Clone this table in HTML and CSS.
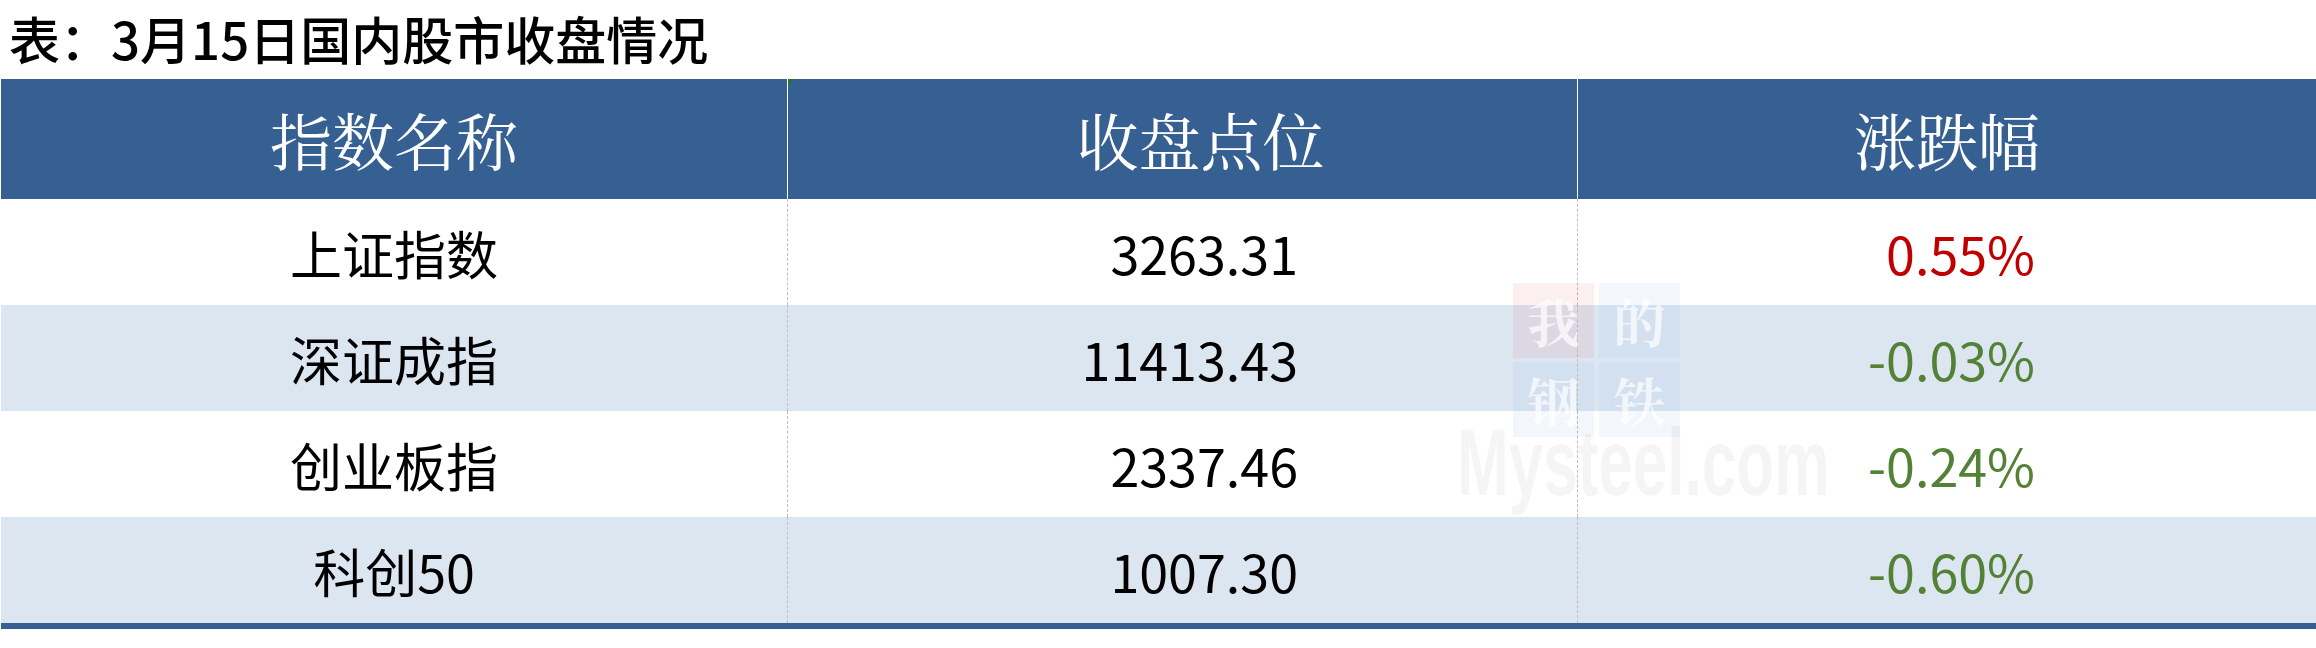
FILE: index.html
```html
<!DOCTYPE html>
<html lang="zh-CN">
<head>
<meta charset="utf-8">
<title>3月15日国内股市收盘情况</title>
<link rel="stylesheet" href="styles.css">
</head>
<body>
<div class="page">
  <div class="title">表：3月15日国内股市收盘情况</div>
  <div class="table">
    <div class="row head">
      <div class="cell">指数名称</div>
      <div class="cell mid flag">收盘点位</div>
      <div class="cell">涨跌幅</div>
    </div>
    <div class="row">
      <div class="cell">上证指数</div>
      <div class="cell num">3263.31</div>
      <div class="cell num up">0.55%</div>
    </div>
    <div class="row alt">
      <div class="cell">深证成指</div>
      <div class="cell num">11413.43</div>
      <div class="cell num down">-0.03%</div>
    </div>
    <div class="row">
      <div class="cell">创业板指</div>
      <div class="cell num">2337.46</div>
      <div class="cell num down">-0.24%</div>
    </div>
    <div class="row alt">
      <div class="cell">科创50</div>
      <div class="cell num">1007.30</div>
      <div class="cell num down">-0.60%</div>
    </div>
  </div>
  <div class="watermark" aria-hidden="true">
    <div class="wm-grid">
      <span class="wm-box red">我</span>
      <span class="wm-box">的</span>
      <span class="wm-box">钢</span>
      <span class="wm-box">铁</span>
    </div>
    <div class="wm-text">Mysteel.com</div>
  </div>
</div>
</body>
</html>
```
FILE: styles.css
```css
html, body {
  margin: 0;
  padding: 0;
  background: #ffffff;
}

.page {
  position: relative;
  width: 2316px;
  height: 648px;
  font-family: "Noto Sans CJK SC", "Noto Sans", sans-serif;
  color: #000000;
}

.title {
  height: 79px;
  line-height: 77px;
  padding-left: 9px;
  font-size: 51px;
  font-weight: 500;
  white-space: nowrap;
}

.table {
  margin-left: 1px;
  width: 2315px;
  border-bottom: 6px solid #376092;
}

.row {
  display: grid;
  grid-template-columns: 786px 790px 739px;
  height: 106px;
}

.row.head {
  height: 120px;
  background: #376092;
  color: #ffffff;
}

.row.alt {
  background: #dce6f1;
}

.cell {
  display: flex;
  align-items: center;
  justify-content: center;
  font-size: 52px;
  white-space: nowrap;
}

.cell + .cell {
  border-left: 1px dashed #bfbfbf;
}

.head .cell {
  font-family: "Noto Serif CJK SC", "Noto Sans CJK SC", serif;
  font-size: 62px;
  font-weight: 400;
}

.head .cell + .cell {
  border-left: 1px solid #ffffff;
}

.head .mid {
  padding-left: 36px;
}

.flag {
  position: relative;
}

.flag::before {
  content: "";
  position: absolute;
  top: 0;
  left: 0;
  border-top: 6px solid #1e7b1e;
  border-right: 6px solid transparent;
}

.num {
  justify-content: flex-end;
  padding-right: 279px;
}

.num.up, .num.down {
  padding-right: 281px;
}

.up {
  color: #c00000;
}

.down {
  color: #538135;
}

.watermark {
  position: absolute;
  left: 1457px;
  top: 283px;
  width: 400px;
  pointer-events: none;
}

.wm-grid {
  display: grid;
  grid-template-columns: 81px 81px;
  grid-auto-rows: 75px;
  gap: 4px 5px;
  margin-left: 56px;
}

.wm-box {
  display: flex;
  align-items: center;
  justify-content: center;
  background: rgba(120, 170, 220, 0.09);
  color: rgba(255, 255, 255, 0.7);
  font-family: "Noto Serif CJK SC", "Noto Sans CJK SC", serif;
  font-weight: 700;
  font-size: 52px;
  line-height: 1;
}

.wm-box.red {
  background: rgba(225, 80, 90, 0.09);
}

.wm-text {
  margin-top: -14px;
  font-family: "Liberation Sans", sans-serif;
  font-weight: 700;
  font-size: 94px;
  line-height: 80px;
  color: rgba(0, 0, 0, 0.04);
  transform: scaleX(0.66);
  transform-origin: left center;
  white-space: nowrap;
}
```
